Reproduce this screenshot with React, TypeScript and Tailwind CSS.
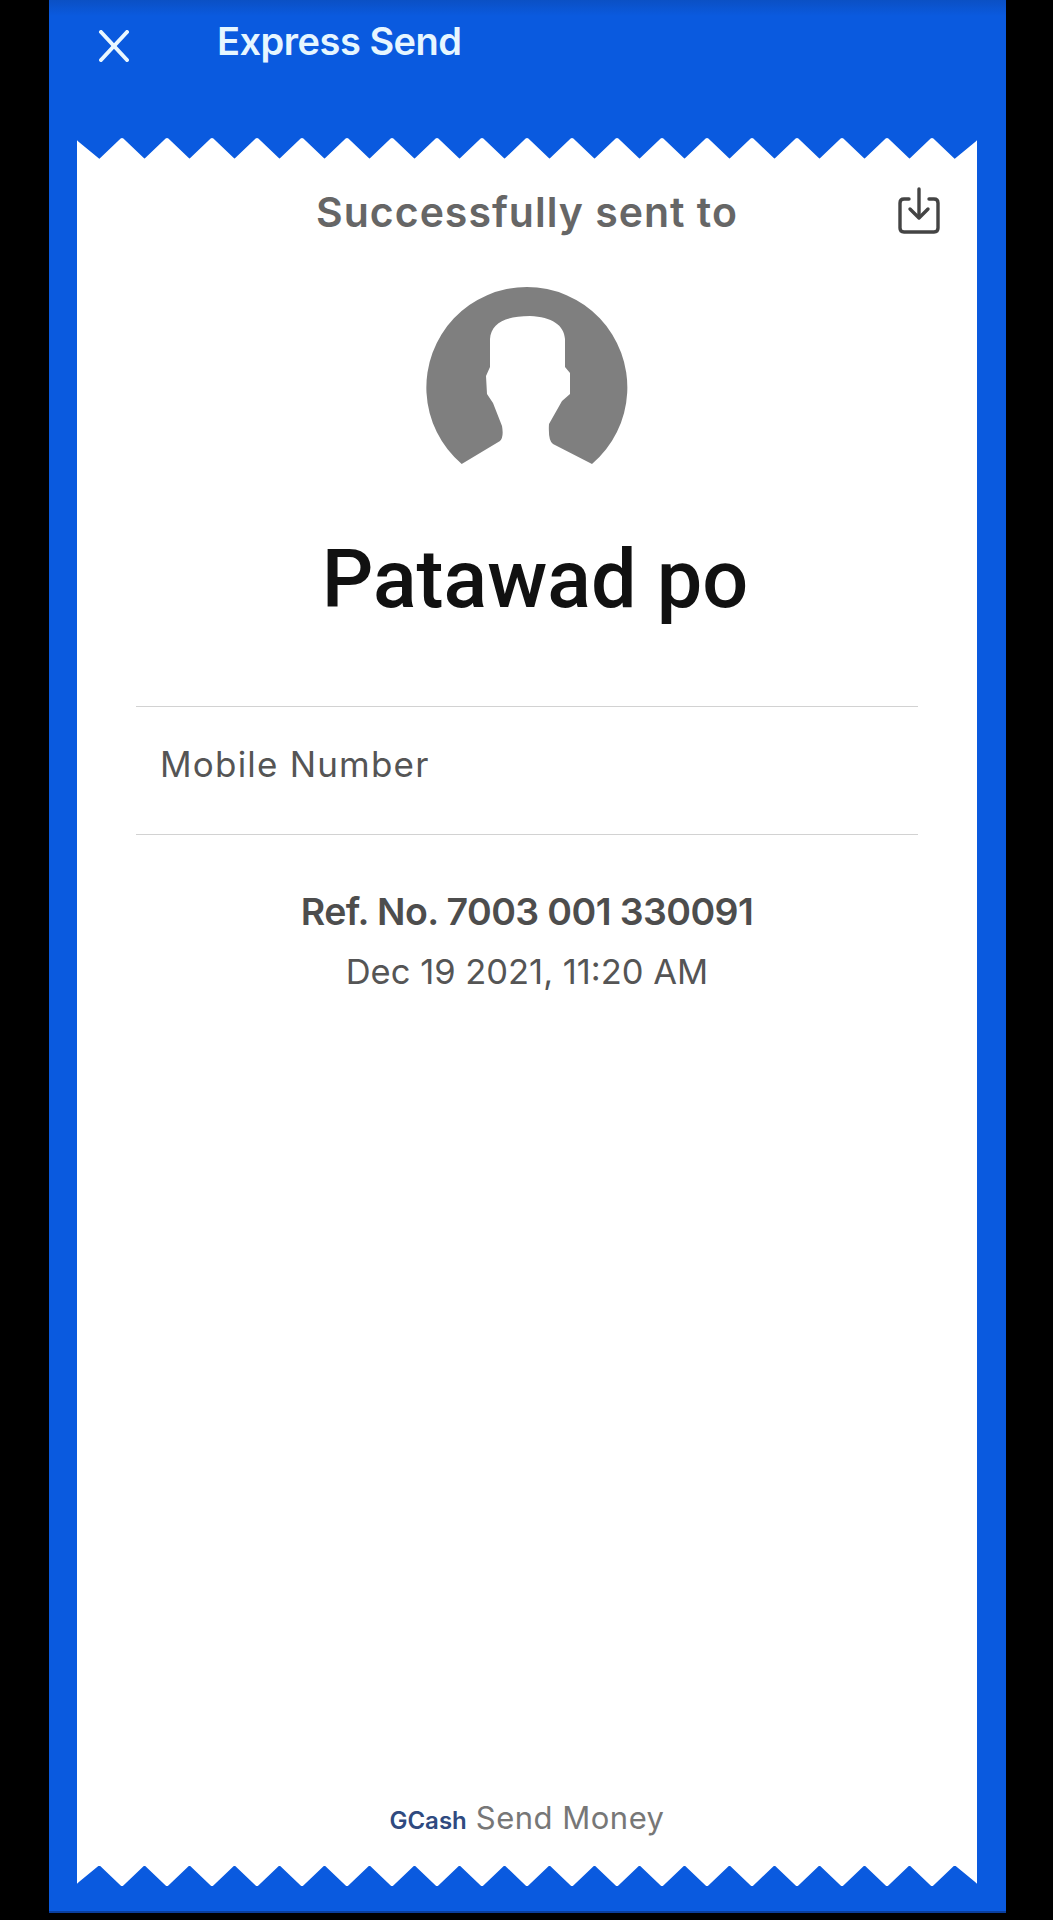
import React from "react";

const TEETH = Array.from({ length: 20 }, (_, i) => i);

// Torn paper edge. Points are mirrored for the bottom of the receipt.
function ZigzagEdge({ flip = false }: { flip?: boolean }) {
  const points = ["-4,26", "-4,2", "0,6"];
  TEETH.forEach((i) => {
    points.push(`${22.5 + i * 45},24.5`);
    if (i < 19) points.push(`${45 + i * 45},3`);
  });
  points.push("900,6", "904,2", "904,26");

  return (
    <svg
      viewBox="0 0 900 26"
      className={`block h-[26px] w-[900px] shrink-0 ${flip ? "-scale-y-100" : ""}`}
    >
      <polygon points={points.join(" ")} fill="#ffffff" stroke="#ffffff" strokeWidth="4" strokeLinejoin="round" />
    </svg>
  );
}

function CloseIcon() {
  return (
    <svg viewBox="0 0 34 32" className="h-[32px] w-[34px]" fill="none" stroke="#e9f7ff" strokeWidth="4" strokeLinecap="round">
      <path d="M4 2 L30 30" />
      <path d="M30 2 L4 30" />
    </svg>
  );
}

function SaveIcon() {
  return (
    <svg viewBox="0 0 44 48" className="h-[48px] w-[44px]" fill="none" stroke="#444444" strokeWidth="3.4" strokeLinecap="round" strokeLinejoin="round">
      <path d="M12 12 H7 Q3 12 3 16 V41 Q3 45 7 45 H37 Q41 45 41 41 V16 Q41 12 37 12 H32" />
      <path d="M22 2 V29" />
      <path d="M13 22 L22 31 L31 22" />
    </svg>
  );
}

function Avatar() {
  return (
    <svg viewBox="45 25 205 180" className="h-[180px] w-[205px]">
      <path
        fill="#7f7f7f"
        d="M81.7 203 A100.5 100.5 0 1 1 212 203 L173 183 Q168 180 169 163 L182 140 L190 133 V112 L185 106 V78 C184 64 172 56 150 55 C126 55 111 62 110 78 V106 L106 115 L107 133 L113 142 L122 165 Q124 176 120 180 Z"
      />
    </svg>
  );
}

export default function App() {
  return (
    <div className="h-[1920px] w-[1053px] bg-black pl-[49px] font-['Inter',sans-serif]">
      <div className="flex h-[1913px] w-[957px] flex-col border-b-2 border-[#0a3f9f] bg-[linear-gradient(#0b50c4_0px,#0a5adf_16px)]">
        {/* Header */}
        <div className="flex h-[137px] shrink-0 items-start pl-[48px] pt-[30px]">
          <CloseIcon />
          <span className="ml-[86px] mt-[-12px] text-[38px] font-semibold leading-[46px] tracking-[-0.5px] text-[#e6f6ff]">
            Express Send
          </span>
        </div>

        {/* Receipt */}
        <div className="ml-[28px] flex w-[900px] flex-1 flex-col pb-[24px]">
          <ZigzagEdge />
          <div className="-my-[2px] flex flex-1 flex-col items-center bg-white">
            <div className="relative mt-[27px] w-full text-center">
              <span className="text-[41px] font-semibold leading-[48px] tracking-[1px] text-[#666666]">
                Successfully sent to
              </span>
              <div className="absolute right-[36px] top-[-1px]">
                <SaveIcon />
              </div>
            </div>

            <div className="mt-[50px]">
              <Avatar />
            </div>

            <h1 className="mt-[69px] translate-x-[8px] font-['Roboto',sans-serif] text-[81px] font-medium leading-[90px] text-[#111111]">
              Patawad po
            </h1>

            <div className="mt-[81px] flex h-[129px] w-[782px] items-center border-y border-[#d2d2d2] pb-[13px] pl-[24px]">
              <span className="text-[35px] tracking-[1.2px] text-[#555555]">Mobile Number</span>
            </div>

            <div className="mt-[54px] text-[37.5px] font-semibold leading-[46px] tracking-[-0.6px] text-[#4d4d4d]">
              Ref. No. 7003 001 330091
            </div>
            <div className="mt-[17px] text-[34.5px] leading-[40px] text-[#555555]">Dec 19 2021, 11:20 AM</div>

            <div className="mb-[22px] mt-auto flex items-baseline gap-[9px]">
              <span className="text-[24px] font-semibold text-[#2f4a80]">GCash</span>
              <span className="text-[31px] tracking-[0.5px] text-[#777777]">Send Money</span>
            </div>
          </div>
          <ZigzagEdge flip />
        </div>
      </div>
    </div>
  );
}
